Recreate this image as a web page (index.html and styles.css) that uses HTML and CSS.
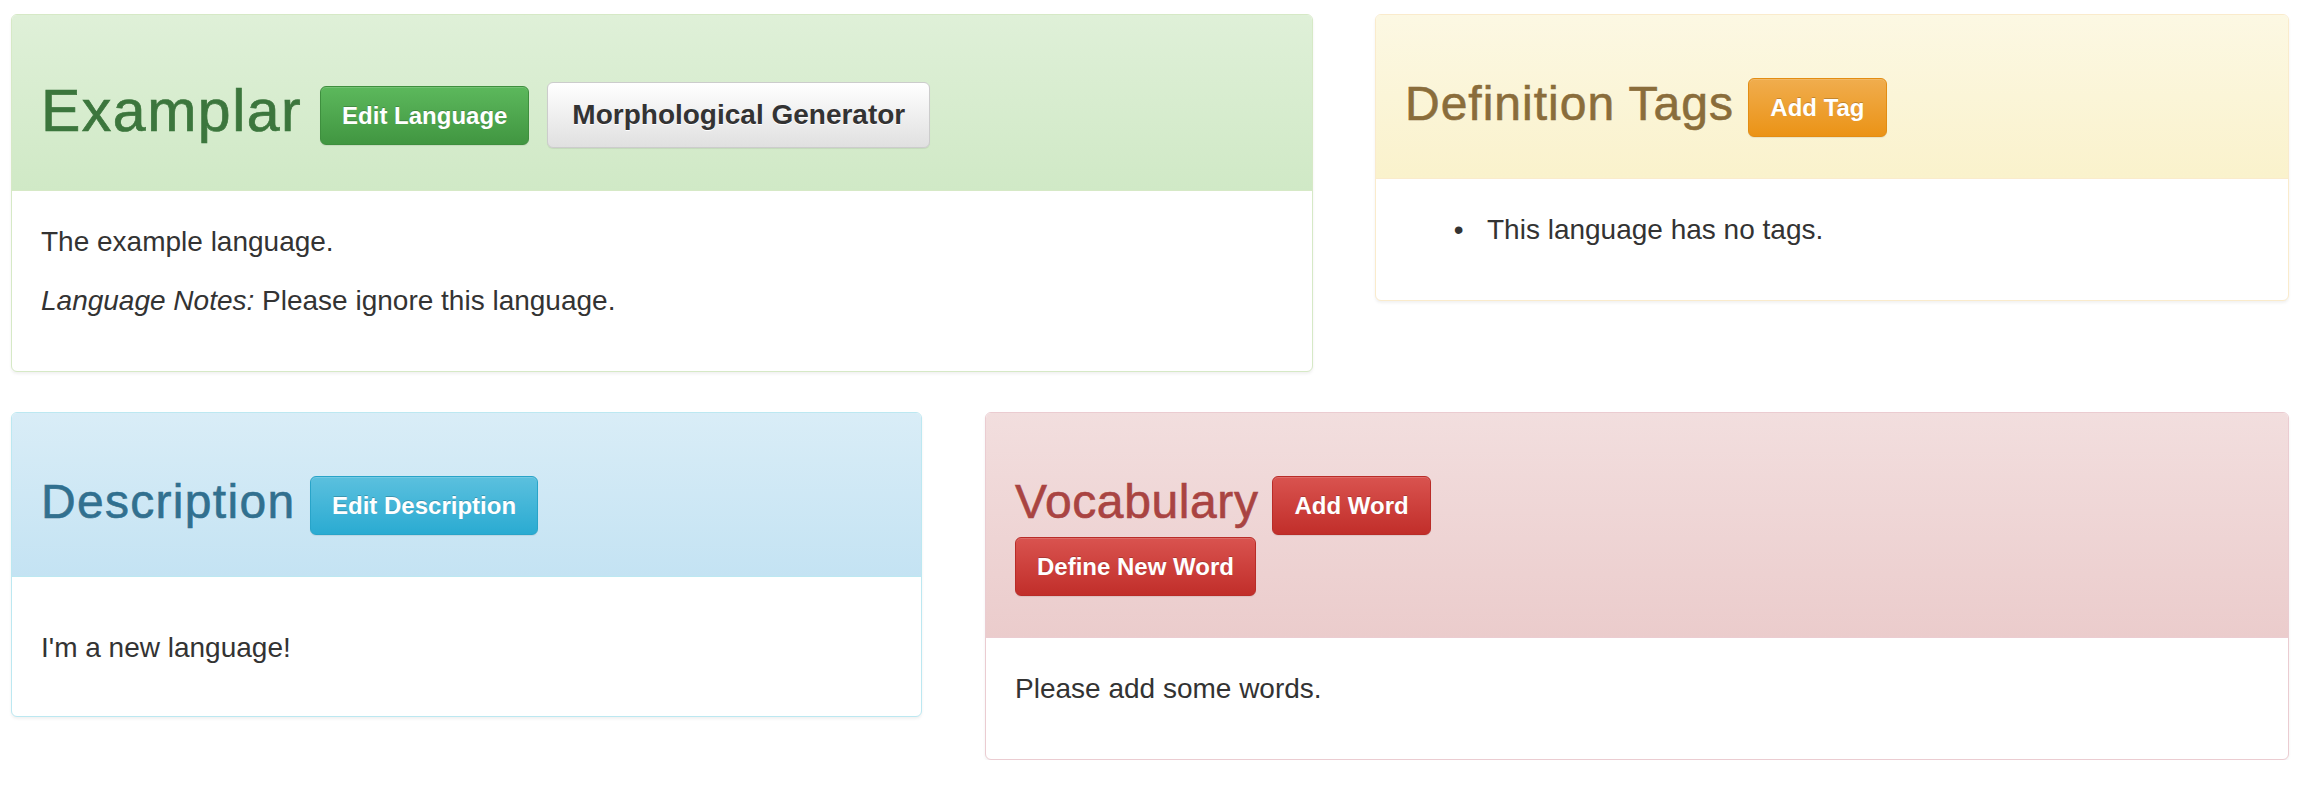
FILE: index.html
```html
<!DOCTYPE html>
<html lang="en">
<head>
<meta charset="utf-8">
<title>Examplar</title>
<link rel="stylesheet" href="styles.css">
</head>
<body>
<div class="page">
  <div class="row row-top">
    <section class="panel panel-success">
      <div class="panel-heading">
        <h1 class="title title-lg">Examplar <button class="btn btn-success">Edit Language</button> <button class="btn btn-default btn-big">Morphological Generator</button></h1>
      </div>
      <div class="panel-body">
        <p>The example language.</p>
        <p><em>Language Notes:</em> Please ignore this language.</p>
      </div>
    </section>
    <section class="panel panel-warning">
      <div class="panel-heading">
        <h2 class="title">Definition Tags <button class="btn btn-warning">Add Tag</button></h2>
      </div>
      <div class="panel-body">
        <ul class="tag-list">
          <li>This language has no tags.</li>
        </ul>
      </div>
    </section>
  </div>
  <div class="row row-bottom">
    <section class="panel panel-info">
      <div class="panel-heading">
        <h2 class="title title-wide">Description <button class="btn btn-info">Edit Description</button></h2>
      </div>
      <div class="panel-body">
        <p class="desc">I'm a new language!</p>
      </div>
    </section>
    <section class="panel panel-danger">
      <div class="panel-heading">
        <h2 class="title title-narrow">Vocabulary <button class="btn btn-danger">Add Word</button><br><button class="btn btn-danger btn-next-line">Define New Word</button></h2>
      </div>
      <div class="panel-body">
        <p>Please add some words.</p>
      </div>
    </section>
  </div>
</div>
</body>
</html>
```

FILE: styles.css
```css
* {
  box-sizing: border-box;
}

html, body {
  margin: 0;
  padding: 0;
  background: #fff;
}

body {
  font-family: "Liberation Sans", Arial, Helvetica, sans-serif;
  font-size: 28px;
  line-height: 41px;
  color: #333;
}

.page {
  padding: 14px 13px 0 11px;
}

.row {
  display: grid;
  align-items: start;
}

.row-top {
  grid-template-columns: 1302px 914px;
  column-gap: 62px;
  margin-bottom: 40px;
}

.row-bottom {
  grid-template-columns: 911px 1304px;
  column-gap: 63px;
}

.panel {
  background: #fff;
  border: 1px solid transparent;
  border-radius: 6px;
  box-shadow: 0 2px 3px rgba(0, 0, 0, 0.06);
}

.panel-heading {
  padding: 16px 29px;
  border-bottom: 1px solid transparent;
  border-radius: 5px 5px 0 0;
}

.panel-body {
  padding: 30px 29px 32px;
}

.panel-body p {
  margin: 0 0 18px;
}

.panel-body .desc {
  margin: 20px 0 16px;
}

.tag-list {
  margin: 0 0 18px;
  padding-left: 82px;
}

.tag-list li::marker {
  content: "\2022\00a0\00a0\00a0";
  color: #333;
}

.title {
  font-family: "Liberation Sans", Arial, Helvetica, sans-serif;
  font-weight: normal;
  font-size: 48px;
  line-height: 1.1;
  letter-spacing: 1px;
  -webkit-text-stroke: 0.6px currentColor;
  margin: 47px 0 25px;
}

.title-wide {
  letter-spacing: 1.3px;
}

.title-narrow {
  letter-spacing: 0.6px;
}

.title-lg {
  font-size: 59px;
  letter-spacing: 1.5px;
  -webkit-text-stroke: 0.7px currentColor;
  margin: 48px 0 26px;
}

/* contextual panels */
.panel-success { border-color: #d6e9c6; }
.panel-success > .panel-heading {
  color: #3c763d;
  border-color: #d6e9c6;
  background-image: linear-gradient(to bottom, #dff0d8 0%, #d0e9c6 100%);
}

.panel-warning { border-color: #faebcc; }
.panel-warning > .panel-heading {
  color: #8a6d3b;
  border-color: #faebcc;
  background-image: linear-gradient(to bottom, #fcf8e3 0%, #faf2cc 100%);
}

.panel-info { border-color: #bce8f1; }
.panel-info > .panel-heading {
  color: #31708f;
  border-color: #bce8f1;
  background-image: linear-gradient(to bottom, #d9edf7 0%, #c4e3f3 100%);
}

.panel-danger { border-color: #ebccd1; }
.panel-danger > .panel-heading {
  color: #a94442;
  border-color: #ebccd1;
  background-image: linear-gradient(to bottom, #f2dede 0%, #ebcccc 100%);
}

/* buttons */
.btn {
  display: inline-block;
  vertical-align: middle;
  margin: 0;
  font-family: "Liberation Sans", Arial, Helvetica, sans-serif;
  font-size: 24px;
  font-weight: bold;
  line-height: 33px;
  letter-spacing: 0;
  -webkit-text-stroke: 0;
  padding: 12px 21px;
  border: 1px solid transparent;
  border-radius: 6px;
  color: #fff;
  text-shadow: 0 -1px 0 rgba(0, 0, 0, 0.2);
  box-shadow: inset 0 1px 0 rgba(255, 255, 255, 0.15), 0 1px 1px rgba(0, 0, 0, 0.075);
  cursor: pointer;
  white-space: nowrap;
}

.btn-next-line {
  margin-top: 2px;
}

.btn-big {
  font-size: 28px;
  line-height: 40px;
  padding: 12px 24px;
}

.btn-success {
  background-image: linear-gradient(to bottom, #5cb85c 0%, #419641 100%);
  border-color: #3e8f3e;
}

.btn-default {
  color: #333;
  text-shadow: 0 1px 0 #fff;
  background-image: linear-gradient(to bottom, #fff 0%, #e0e0e0 100%);
  border-color: #ccc;
}

.btn-warning {
  background-image: linear-gradient(to bottom, #f0ad4e 0%, #eb9316 100%);
  border-color: #e38d13;
}

.btn-info {
  background-image: linear-gradient(to bottom, #5bc0de 0%, #2aabd2 100%);
  border-color: #28a4c9;
}

.btn-danger {
  background-image: linear-gradient(to bottom, #d9534f 0%, #c12e2a 100%);
  border-color: #b92c28;
}
```
